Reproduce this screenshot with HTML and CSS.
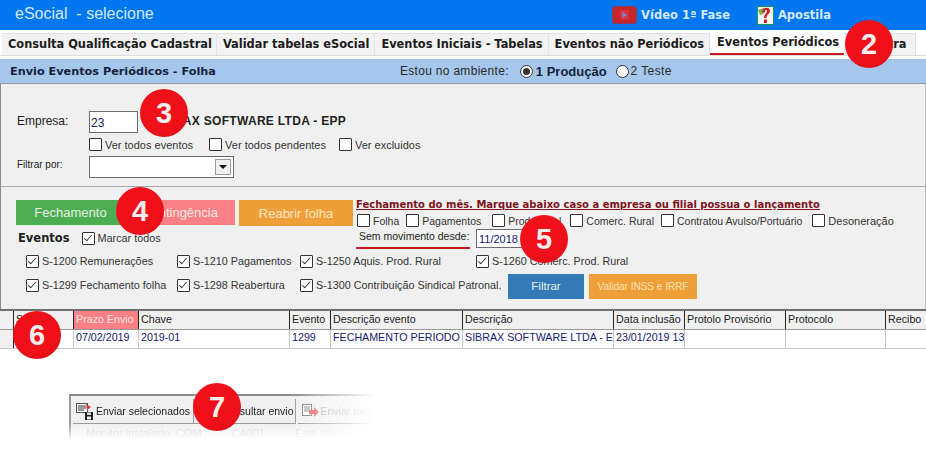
FILE: index.html
```html
<!DOCTYPE html>
<html lang="en">
<head>
  <meta charset="UTF-8">
  <title>eSocial - selecione</title>
  <link rel="stylesheet" href="styles.css">
</head>
<body>
  <div class="page">
    <!-- Top bar -->
    <div class="topbar">
      <div class="app-title">eSocial&nbsp; - selecione</div>
      <div class="top-links">
        <div class="top-link video-link">
          <svg width="25" height="18" viewBox="0 0 25 18">
            <rect x="0.5" y="0.5" width="24" height="17" rx="3" fill="#c4262e" stroke="#8d3a5c"/>
            <rect x="8" y="4" width="9" height="10" rx="1" fill="#d9323a"/>
            <path d="M10.5 6 L15 9 L10.5 12 Z" fill="#6c8fe0"/>
          </svg>
          <span>Vídeo 1ª Fase</span>
        </div>
        <div class="top-link book-link">
          <svg width="17" height="19" viewBox="0 0 17 19">
            <rect x="0.5" y="0.5" width="16" height="18" fill="#f4f4ee" stroke="#159a55"/>
            <path d="M1 4 L7 2 L8 7 L3 9 Z" fill="#7fae54"/>
            <path d="M5 6 C5 1 13 0 13 5 C13 8 9.500 8 9.500 12 L7 12 C7 8 10 7.500 10 5 C10 3.500 8 3.800 8 6 Z" fill="#d4202a"/>
            <rect x="7" y="13.500" width="3" height="3.500" fill="#d4202a"/>
          </svg>
          <span>Apostila</span>
        </div>
      </div>
    </div>

    <!-- Tabs -->
    <div class="tabs">
      <div class="tab tab-first">Consulta Qualificação Cadastral</div>
      <div class="tab">Validar tabelas eSocial</div>
      <div class="tab">Eventos Iniciais - Tabelas</div>
      <div class="tab">Eventos não Periódicos</div>
      <div class="tab tab-active">Eventos Periódicos</div>
      <div class="tab tab-last">Outra</div>
    </div>

    <!-- Section title -->
    <div class="section-bar">
      <div class="section-title">Envio Eventos Periódicos - Folha</div>
      <div class="ambiente">
        <span class="ambiente-label">Estou no ambiente:</span>
        <span class="radio radio-on"></span><b>1 Produção</b>
        <span class="radio"></span><span class="teste">2 Teste</span>
      </div>
    </div>

    <!-- Empresa -->
    <div class="panel panel-empresa">
      <div class="empresa-row">
        <label class="empresa-label">Empresa:</label>
        <div class="input empresa-input">23</div>
        <div class="empresa-nome">SIBRAX SOFTWARE LTDA - EPP</div>
      </div>
      <div class="ver-row">
        <label class="check"><span class="box"></span>Ver todos eventos</label>
        <label class="check"><span class="box"></span>Ver todos pendentes</label>
        <label class="check"><span class="box"></span>Ver excluidos</label>
      </div>
      <div class="filtrar-row">
        <label class="filtrar-label">Filtrar por:</label>
        <div class="select"><span class="select-btn"></span></div>
      </div>
    </div>

    <!-- Eventos -->
    <div class="panel panel-eventos">
      <div class="eventos-left">
        <div class="btn-row">
          <div class="btn btn-green">Fechamento</div>
          <div class="btn btn-pink">Contingência</div>
          <div class="btn btn-orange">Reabrir folha</div>
        </div>
        <div class="marcar-row">
          <b class="eventos-title">Eventos</b>
          <label class="check checked"><span class="box"></span>Marcar todos</label>
        </div>
      </div>
      <div class="fechamento">
        <div class="fechamento-title">Fechamento do mês. Marque abaixo caso a empresa ou filial possua o lançamento</div>
        <div class="fechamento-checks">
          <label class="check"><span class="box"></span>Folha</label>
          <label class="check"><span class="box"></span>Pagamentos</label>
          <label class="check"><span class="box"></span>Prod. Rural</label>
          <label class="check"><span class="box"></span>Comerc. Rural</label>
          <label class="check"><span class="box"></span>Contratou Avulso/Portuário</label>
          <label class="check"><span class="box"></span>Desoneração</label>
        </div>
        <div class="sem-mov">
          <span class="sem-mov-label">Sem movimento desde:</span>
          <div class="input sem-mov-input">11/2018</div>
        </div>
      </div>
      <div class="s-grid">
        <label class="check checked"><span class="box"></span>S-1200 Remunerações</label>
        <label class="check checked"><span class="box"></span>S-1210 Pagamentos</label>
        <label class="check checked"><span class="box"></span>S-1250 Aquis. Prod. Rural</label>
        <label class="check checked"><span class="box"></span>S-1260 Comerc. Prod. Rural</label>
        <label class="check checked"><span class="box"></span>S-1299 Fechamento folha</label>
        <label class="check checked"><span class="box"></span>S-1298 Reabertura</label>
        <label class="check checked"><span class="box"></span>S-1300 Contribuição Sindical Patronal.</label>
        <div class="s-actions">
          <div class="btn btn-blue">Filtrar</div>
          <div class="btn btn-validar">Validar INSS e IRRF</div>
        </div>
      </div>
    </div>

    <!-- Grid -->
    <div class="grid">
      <div class="grid-row grid-head">
        <div class="cell c0"></div>
        <div class="cell c1">Status</div>
        <div class="cell c2 prazo">Prazo Envio</div>
        <div class="cell c3">Chave</div>
        <div class="cell c4">Evento</div>
        <div class="cell c5">Descrição evento</div>
        <div class="cell c6">Descrição</div>
        <div class="cell c7">Data inclusão</div>
        <div class="cell c8">Protolo Provisório</div>
        <div class="cell c9">Protocolo</div>
        <div class="cell c10">Recibo</div>
      </div>
      <div class="grid-row grid-data">
        <div class="cell c0"></div>
        <div class="cell c1"></div>
        <div class="cell c2">07/02/2019</div>
        <div class="cell c3">2019-01</div>
        <div class="cell c4">1299</div>
        <div class="cell c5">FECHAMENTO PERIODO</div>
        <div class="cell c6">SIBRAX SOFTWARE LTDA - EPP</div>
        <div class="cell c7">23/01/2019 13:20</div>
        <div class="cell c8"></div>
        <div class="cell c9"></div>
        <div class="cell c10"></div>
      </div>
    </div>

    <!-- Toolbar clip -->
    <div class="clip">
      <div class="clip-buttons">
        <div class="clip-btn clip-send">
          <svg width="18" height="17" viewBox="0 0 18 17">
            <rect x="0.500" y="0.500" width="11" height="9" fill="#fff" stroke="#555"/>
            <path d="M2 3 H10 M2 5 H10 M2 7 H8" stroke="#333"/>
            <path d="M10 1 L15 4 L11 7 Z" fill="#d23a3a"/>
            <rect x="9" y="9" width="8" height="8" fill="#222"/>
            <rect x="11" y="9.500" width="4" height="2.500" fill="#ddd"/>
            <rect x="11" y="13.500" width="4" height="3" fill="#eee"/>
          </svg>
          <span>Enviar selecionados</span>
        </div>
        <div class="clip-btn clip-consult"><span>Consultar envio</span></div>
        <div class="clip-btn clip-all">
          <svg width="17" height="15" viewBox="0 0 17 15">
            <rect x="0.500" y="0.500" width="9" height="11" fill="#fff" stroke="#777"/>
            <path d="M2 3 H8 M2 5 H8 M2 7 H7" stroke="#777"/>
            <path d="M7 6 H12 V3 L17 8 L12 13 V10 H7 Z" fill="#e8605c"/>
          </svg>
          <span>Enviar todos</span>
        </div>
      </div>
      <div class="clip-status">
        <span>Monitor instalado: COM</span><span>CA001</span><span>Está ativo</span>
      </div>
    </div>

    <!-- Numbered callouts -->
    <div class="badge b2">2</div>
    <div class="badge b3">3</div>
    <div class="badge b4">4</div>
    <div class="badge b5">5</div>
    <div class="badge b6">6</div>
    <div class="badge b7">7</div>
  </div>
</body>
</html>
```

FILE: styles.css
```css
html, body {
  margin: 0;
  padding: 0;
  background: #fff;
}
body {
  font-family: "Liberation Sans", Arial, sans-serif;
  font-size: 12px;
  color: #222;
}
.page {
  position: relative;
  width: 926px;
  height: 453px;
  overflow: hidden;
}

/* top bar */
.topbar {
  height: 30px;
  background: #0076ef;
  display: flex;
  align-items: center;
  justify-content: space-between;
}
.app-title {
  margin-left: 15px;
  color: #d4e8fb;
  font-size: 16px;
  margin-top: -2px;
}
.top-links {
  display: flex;
  align-items: center;
  margin-right: 95px;
}
.top-link {
  display: flex;
  align-items: center;
  gap: 4px;
  color: #d6e8fb;
  font-family: "DejaVu Sans", sans-serif;
  font-weight: bold;
  font-size: 11.500px;
}
.video-link {
  margin-right: 27px;
}

/* tabs */
.tabs {
  height: 22px;
  padding: 3px 0 0 2px;
  display: flex;
  background: #fff;
  border-bottom: 1px solid #ddd;
}
.tab {
  height: 22px;
  box-sizing: border-box;
  padding: 3px 5px 0 6px;
  background: #f2f2f2;
  border: 1px solid #e2e2e2;
  border-width: 1px 1px 0 0;
  font-family: "DejaVu Sans", sans-serif;
  font-weight: bold;
  font-size: 11.400px;
  white-space: nowrap;
  color: #1c1c1c;
}
.tab-first {
  padding-right: 4px;
}
.tab-active {
  background: #fff;
  border: 0;
  height: 25px;
  padding: 0 5px 0 7px;
  margin-top: -3px;
  line-height: 25px;
  box-shadow: inset 0 -2px 0 #c9181f;
}
.tab-last {
  padding-left: 26px;
  padding-right: 8px;
}

/* section bar */
.section-bar {
  margin-top: 3px;
  height: 24px;
  background: #a5c7ec;
  border-bottom: 1px solid #8f9ba8;
  display: flex;
  align-items: center;
}
.section-title {
  width: 400px;
  padding-left: 10px;
  box-sizing: border-box;
  font-family: "DejaVu Sans", sans-serif;
  font-weight: bold;
  font-size: 11.250px;
  color: #14233c;
}
.ambiente {
  display: flex;
  align-items: center;
  font-size: 12px;
  color: #2a2a2a;
}
.ambiente-label {
  margin-right: 11px;
  letter-spacing: 0.3px;
}
.ambiente b {
  font-size: 13px;
  color: #15233a;
  margin: 0 9px 0 1px;
}
.teste {
  letter-spacing: 0.4px;
}
.radio {
  width: 11px;
  height: 11px;
  border: 1px solid #333;
  border-radius: 50%;
  background: #fff;
  margin-right: 2px;
}
.radio-on::after {
  content: "";
  display: block;
  width: 7px;
  height: 7px;
  margin: 2px;
  border-radius: 50%;
  background: #333;
}

/* panels */
.panel {
  background: #f0f0f0;
  border-left: 1px solid #8a8a8a;
  border-right: 1px solid #bbb;
  border-bottom: 1px solid #a8a8a8;
  box-sizing: border-box;
}
.panel-empresa {
  height: 103px;
  padding: 27px 0 0 16px;
}
.empresa-row {
  display: flex;
  align-items: center;
  height: 22px;
}
.empresa-label {
  width: 72px;
  font-size: 12px;
  margin-top: -3px;
}
.input {
  background: #fff;
  border: 1px solid #6c6c6c;
  box-sizing: border-box;
  color: #16206e;
}
.empresa-input {
  width: 49px;
  height: 22px;
  padding: 4px 1px 0;
  font-size: 12px;
}
.empresa-nome {
  margin-left: 15px;
  font-weight: bold;
  font-size: 12px;
  letter-spacing: 0.3px;
  margin-top: -3px;
  color: #222;
}
.check {
  display: inline-flex;
  align-items: center;
  gap: 3px;
  font-size: 11px;
  color: #333;
  white-space: nowrap;
}
.box {
  width: 11px;
  height: 11px;
  border: 1px solid #333;
  background: #fff;
  border-radius: 1px;
  flex: none;
  position: relative;
}
.checked .box::after {
  content: "";
  position: absolute;
  left: 3px;
  top: 0;
  width: 3px;
  height: 7px;
  border: solid #333;
  border-width: 0 1px 1px 0;
  transform: rotate(42deg);
}
.ver-row {
  margin: 3px 0 0 72px;
  display: flex;
  gap: 16px;
  height: 17px;
  align-items: center;
}
.ver-row .check:last-child {
  margin-left: -3px;
}
.filtrar-row {
  display: flex;
  align-items: center;
  margin-top: 3px;
}
.filtrar-label {
  width: 72px;
  font-size: 10px;
  margin-top: -5px;
}
.select {
  width: 145px;
  height: 22px;
  border: 1px solid #6c6c6c;
  background: #fff;
  box-sizing: border-box;
  display: flex;
  justify-content: flex-end;
  align-items: center;
  padding-right: 2px;
}
.select-btn {
  width: 16px;
  height: 16px;
  background: #f0f0f0;
  border: 1px solid #9a9a9a;
  box-sizing: border-box;
  position: relative;
}
.select-btn::after {
  content: "";
  position: absolute;
  left: 3px;
  top: 5px;
  border: 4px solid transparent;
  border-top: 4px solid #111;
  border-bottom: 0;
}

/* eventos panel */
.panel-eventos {
  height: 122px;
  display: grid;
  grid-template-columns: 340px 1fr;
  grid-template-rows: 49px auto;
  padding: 13px 0 0 15px;
  border-bottom: 0;
}
.btn-row {
  display: flex;
  align-items: flex-start;
}
.btn {
  display: flex;
  align-items: center;
  justify-content: center;
  color: #e6efe6;
  font-size: 13px;
  box-sizing: border-box;
}
.btn-green {
  width: 109px;
  height: 25px;
  background: #4cae50;
}
.btn-pink {
  width: 110px;
  height: 25px;
  background: #f98084;
  color: #ffe8e8;
}
.btn-orange {
  width: 114px;
  height: 26px;
  margin-left: 4px;
  background: #ee9f38;
  color: #fde4c0;
}
.marcar-row {
  display: flex;
  align-items: center;
  gap: 12px;
  margin: 2px 0 0 2px;
  height: 20px;
}
.marcar-row .check {
  font-size: 10.800px;
}
.eventos-title {
  font-family: "DejaVu Sans", sans-serif;
  font-size: 11.500px;
  color: #222;
}
.fechamento {
  margin-top: -2px;
}
.fechamento-title {
  font-family: "DejaVu Sans", sans-serif;
  font-weight: bold;
  font-size: 10px;
  line-height: 13px;
  color: #7d1420;
  text-decoration: underline;
  white-space: nowrap;
}
.fechamento-checks {
  display: flex;
  gap: 7px;
  height: 17px;
  align-items: center;
  margin-top: 1px;
  margin-left: 1px;
}
.fechamento-checks .check {
  font-size: 10.500px;
}
.fechamento-checks .check:nth-child(3) {
  margin-left: 4px;
}
.fechamento-checks .check:nth-child(4) {
  margin-left: 2px;
}
.fechamento-checks .check:last-child {
  margin-left: 3px;
  font-size: 11px;
}
.sem-mov {
  display: flex;
  align-items: center;
  margin-top: -2px;
}
.sem-mov-label {
  width: 114px;
  height: 22px;
  line-height: 18px;
  box-sizing: border-box;
  border-bottom: 2px solid #c9181f;
  padding-left: 3px;
  font-size: 10.500px;
  color: #222;
  margin-right: 6px;
  white-space: nowrap;
}
.sem-mov-input {
  width: 52px;
  height: 19px;
  padding: 3px 2px 0;
  font-size: 11px;
}
.s-grid {
  grid-column: 1 / 3;
  display: grid;
  grid-template-columns: 151px 123px 176px 1fr;
  grid-auto-rows: 24px;
  align-items: center;
  padding-left: 10px;
}
.s-grid .check {
  font-size: 10.800px;
}
.s-actions {
  display: flex;
  gap: 5px;
  margin: 2px 0 0 32px;
}
.btn-blue {
  width: 76px;
  height: 25px;
  background: #337ab7;
  font-size: 11.500px;
}
.btn-validar {
  width: 108px;
  height: 25px;
  background: #ee9f38;
  color: #fbe3b6;
  font-size: 10px;
}

/* data grid */
.grid {
  border-top: 2px solid #6f6f6f;
}
.grid-row {
  display: flex;
}
.grid-head {
  background: #f0f0f0;
  height: 18px;
  border-bottom: 1px solid #999;
}
.grid-data {
  background: #fff;
  height: 18px;
  border-bottom: 1px solid #c8c8c8;
  color: #16206e;
}
.grid-data .cell {
  line-height: 14px;
}
.cell {
  font-size: 10.700px;
  line-height: 17px;
  padding-left: 2px;
  box-sizing: border-box;
  white-space: nowrap;
  overflow: hidden;
  border-right: 1px solid #c8c8c8;
}
.grid-head .cell {
  border-right: 1px solid #222;
  color: #222;
}
.c0 { width: 14px; background: #f0f0f0; border-right: 1px solid #222 !important; }
.c1 { width: 60px; }
.c2 { width: 65px; }
.c3 { width: 151px; }
.c4 { width: 41px; }
.c5 { width: 132px; }
.c6 { width: 151px; }
.c7 { width: 71px; }
.c8 { width: 101px; }
.c9 { width: 100px; }
.c10 { width: 40px; border-right: 0 !important; }
.grid-head .prazo {
  background: #f98084;
  color: #fde3e3;
}

/* toolbar clip */
.clip {
  margin: 45px 0 0 69px;
  width: 304px;
  height: 44px;
  border-top: 2px solid #8c8c8c;
  border-left: 2px solid #9a9a9a;
  background: #f0f0f0;
  -webkit-mask-image: linear-gradient(to right, #000 72%, transparent 100%), linear-gradient(to bottom, #000 65%, transparent 100%);
  -webkit-mask-composite: source-in;
  mask-composite: intersect;
}
.clip-buttons {
  display: flex;
  padding: 3px 0 0 2px;
  height: 25px;
}
.clip-btn {
  display: flex;
  align-items: center;
  gap: 2px;
  height: 25px;
  border-right: 1px solid #999;
  border-bottom: 1px solid #999;
  box-sizing: border-box;
  font-size: 10.500px;
  white-space: nowrap;
  overflow: hidden;
  padding-left: 3px;
}
.clip-btn svg {
  flex: none;
}
.clip-send { width: 122px; }
.clip-consult { width: 102px; justify-content: flex-end; padding-right: 1px; }
.clip-all { width: 78px; margin-left: 2px; padding-left: 4px; color: #aaa; }
.clip-status {
  display: flex;
  gap: 30px;
  padding: 3px 0 0 15px;
  font-size: 11px;
  color: #ccc;
}

/* numbered callouts */
.badge {
  position: absolute;
  width: 48px;
  height: 48px;
  border-radius: 50%;
  background: radial-gradient(circle at 42% 38%, #f0101a 60%, #d40c16 100%);
  color: #f6eeee;
  font-weight: bold;
  font-size: 29px;
  line-height: 48px;
  text-align: center;
}
.b2 { left: 845px; top: 20px; }
.b3 { left: 140px; top: 89px; }
.b4 { left: 116px; top: 187px; }
.b5 { left: 520px; top: 215px; }
.b6 { left: 13px; top: 311px; }
.b7 { left: 193px; top: 383px; }
```
